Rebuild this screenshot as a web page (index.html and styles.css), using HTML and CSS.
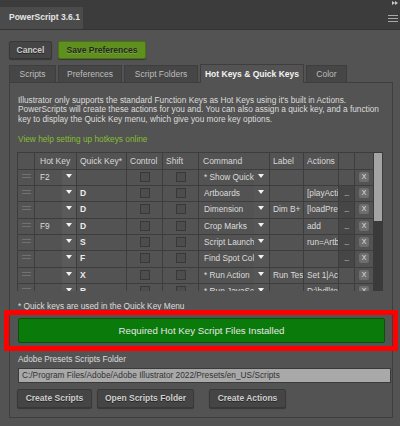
FILE: index.html
```html
<!DOCTYPE html>
<html lang="en">
<head>
    <meta charset="UTF-8">
    <title>PowerScript</title>
    <link rel="stylesheet" href="styles.css">
</head>
<body>
    <div class="topbar">
        <div class="title-tab">PowerScript 3.6.1</div>
        <div class="corner">
            <svg class="collapse" width="6" height="4" viewBox="0 0 6 4"><path d="M0 0L3 2L0 4ZM3 0L6 2L3 4Z" fill="#c8c8c8"/></svg>
            <svg class="menu" width="10" height="7" viewBox="0 0 10 7"><path d="M0 0.5H10M0 3.5H10M0 6.5H10" stroke="#a8a8a8" stroke-width="1"/></svg>
        </div>
    </div>

    <div class="toolbar">
        <div class="btn btn-cancel">Cancel</div>
        <div class="btn btn-save">Save Preferences</div>
    </div>

    <div class="tabs">
        <div class="tab tab-scripts">Scripts</div>
        <div class="tab tab-prefs">Preferences</div>
        <div class="tab tab-folders">Script Folders</div>
        <div class="tab tab-hotkeys active">Hot Keys &amp; Quick Keys</div>
        <div class="tab tab-color">Color</div>
    </div>

    <div class="content">
        <p class="intro">Illustrator only supports the standard Function Keys as Hot Keys using it's built in Actions.<br>
        PowerScripts will create these actions for you and. You can also assign a quick key, and a function<br>
        key to display the Quick Key menu, which give you more key options.</p>

        <div class="help">View help setting up hotkeys online</div>

        <div class="keys">
            <div class="grid">
                <!-- header -->
                <div class="c"></div>
                <div class="c h">Hot Key</div>
                <div class="c h">Quick Key*</div>
                <div class="c h">Control</div>
                <div class="c h">Shift</div>
                <div class="c h hcmd">Command</div>
                <div class="c h">Label</div>
                <div class="c h">Actions</div>
                <div class="c"></div>
                <div class="c"></div>

                <!-- row 1 -->
                <div class="c grip"><i></i></div>
                <div class="c hk"><span>F2</span><b class="dd"></b></div>
                <div class="c qk"></div>
                <div class="c chk"><span class="cb"></span></div>
                <div class="c chk"><span class="cb"></span></div>
                <div class="c cmd"><span>* Show Quick Key Menu</span><b class="dd"></b></div>
                <div class="c txt"></div>
                <div class="c txt"></div>
                <div class="c"></div>
                <div class="c del"><span class="x">X</span></div>

                <!-- row 2 -->
                <div class="c grip"><i></i></div>
                <div class="c hk"><span></span><b class="dd"></b></div>
                <div class="c qk">D</div>
                <div class="c chk"><span class="cb"></span></div>
                <div class="c chk"><span class="cb"></span></div>
                <div class="c cmd"><span>Artboards</span><b class="dd"></b></div>
                <div class="c txt"></div>
                <div class="c txt">[playAction]</div>
                <div class="c dots">...</div>
                <div class="c del"><span class="x">X</span></div>

                <!-- row 3 -->
                <div class="c grip"><i></i></div>
                <div class="c hk"><span></span><b class="dd"></b></div>
                <div class="c qk">D</div>
                <div class="c chk"><span class="cb"></span></div>
                <div class="c chk"><span class="cb"></span></div>
                <div class="c cmd"><span>Dimension</span><b class="dd"></b></div>
                <div class="c txt">Dim B+</div>
                <div class="c txt">[loadPreset]</div>
                <div class="c dots">...</div>
                <div class="c del"><span class="x">X</span></div>

                <!-- row 4 -->
                <div class="c grip"><i></i></div>
                <div class="c hk"><span>F9</span><b class="dd"></b></div>
                <div class="c qk">D</div>
                <div class="c chk"><span class="cb"></span></div>
                <div class="c chk"><span class="cb"></span></div>
                <div class="c cmd"><span>Crop Marks</span><b class="dd"></b></div>
                <div class="c txt"></div>
                <div class="c txt">add</div>
                <div class="c dots">...</div>
                <div class="c del"><span class="x">X</span></div>

                <!-- row 5 -->
                <div class="c grip"><i></i></div>
                <div class="c hk"><span></span><b class="dd"></b></div>
                <div class="c qk">S</div>
                <div class="c chk"><span class="cb"></span></div>
                <div class="c chk"><span class="cb"></span></div>
                <div class="c cmd"><span>Script Launcher</span><b class="dd"></b></div>
                <div class="c txt"></div>
                <div class="c txt">run=ArtboardsToFiles</div>
                <div class="c dots">...</div>
                <div class="c del"><span class="x">X</span></div>

                <!-- row 6 -->
                <div class="c grip"><i></i></div>
                <div class="c hk"><span></span><b class="dd"></b></div>
                <div class="c qk">F</div>
                <div class="c chk"><span class="cb"></span></div>
                <div class="c chk"><span class="cb"></span></div>
                <div class="c cmd"><span>Find Spot Color</span><b class="dd"></b></div>
                <div class="c txt"></div>
                <div class="c txt"></div>
                <div class="c dots">...</div>
                <div class="c del"><span class="x">X</span></div>

                <!-- row 7 -->
                <div class="c grip"><i></i></div>
                <div class="c hk"><span></span><b class="dd"></b></div>
                <div class="c qk">X</div>
                <div class="c chk"><span class="cb"></span></div>
                <div class="c chk"><span class="cb"></span></div>
                <div class="c cmd"><span>* Run Action</span><b class="dd"></b></div>
                <div class="c txt">Run Test</div>
                <div class="c txt">Set 1|Action 1</div>
                <div class="c"></div>
                <div class="c del"><span class="x">X</span></div>

                <!-- row 8 -->
                <div class="c grip"><i></i></div>
                <div class="c hk"><span></span><b class="dd"></b></div>
                <div class="c qk">R</div>
                <div class="c chk"><span class="cb"></span></div>
                <div class="c chk"><span class="cb"></span></div>
                <div class="c cmd"><span>* Run JavaScript</span><b class="dd"></b></div>
                <div class="c txt"></div>
                <div class="c txt">D:\bdl\test.jsx</div>
                <div class="c"></div>
                <div class="c del"><span class="x">X</span></div>
            </div>
            <div class="scrollbar"><div class="thumb"></div></div>
        </div>

        <p class="note">* Quick keys are used in the Quick Key Menu</p>

        <div class="installed">Required Hot Key Script Files Installed</div>

        <div class="folder-label">Adobe Presets Scripts Folder</div>
        <div class="folder-input">C:/Program Files/Adobe/Adobe Illustrator 2022/Presets/en_US/Scripts</div>

        <div class="actions">
            <div class="btn btn-create">Create Scripts</div>
            <div class="btn btn-open">Open Scripts Folder</div>
            <div class="btn btn-actions">Create Actions</div>
        </div>
    </div>

    <!-- red annotation frame -->
    <div class="highlight"></div>
</body>
</html>
```

FILE: styles.css
```css
body{margin: 0; width: 400px; height: 426px; overflow: hidden; position: relative; background: #535353; color: #dcdcdc; font-family: "Liberation Sans", Arial, sans-serif; font-size: 8.3px;}

/* panel header */
.topbar{height: 29px; display: flex; background: #3c3c3c; border-bottom: 1px solid #333;}
.title-tab{align-self: flex-end; width: 74px; height: 22px; padding-left: 9px; line-height: 21px; background: #4b4b4b; color: #e4e4e4; font-weight: bold; font-size: 8.5px;}
.corner{margin-left: auto; display: flex; flex-direction: column; align-items: flex-end; padding-right: 2px;}
.collapse{margin-top: 1px;}
.menu{margin-top: 10px;}

/* buttons */
.btn{height: 18px; box-sizing: border-box; line-height: 16px; text-align: center; border: 1px solid #383838; border-radius: 2px; background: #454545; color: #cfcfcf; font-weight: bold; font-size: 8.5px; text-shadow: 0 1px 0 #222; box-shadow: 0 1px 1px rgba(0,0,0,.35);}
.toolbar{display: flex; gap: 6px; padding: 11px 9px 0;}
.btn-cancel{width: 43px;}
.btn-save{width: 88px; background: #5e8f1f; border-color: #4a7414; color: #262626; text-shadow: 0 1px 0 #7aa83a;}

/* tabs */
.tabs{display: flex; gap: 2px; padding-left: 9px; margin-top: 6px; height: 17px; align-items: flex-end;}
.tab{height: 17px; box-sizing: border-box; line-height: 16px; text-align: center; background: #464646; color: #bdbdbd; font-size: 8.5px; border: 1px solid #3e3e3e; border-bottom: none;}
.tab-scripts{width: 47px;}
.tab-prefs{width: 64px;}
.tab-folders{width: 74px;}
.tab-hotkeys{width: 104px;}
.tab-color{width: 41px;}
.tab.active{height: 19px; margin-bottom: -1px; position: relative; background: #535353; color: #f2f2f2; font-weight: bold; line-height: 18px;}

/* tab page */
.content{margin-left: 9px; width: 384px; height: 336px; box-sizing: border-box; border: 1px solid #3e3e3e; padding: 13px 0 0 8px;}
.intro{margin: 0; line-height: 9.3px; white-space: nowrap;}
.help{margin-top: 10px; line-height: 10px; color: #86bd32;}

/* hot key table */
.keys{display: flex; margin: 8px 0 0 -1px; height: 139px; overflow: hidden;}
.grid{display: grid; grid-template-columns: 16px 41px 49px 35px 35px 70px 33px 34px 15px 18px; grid-template-rows: 16px; grid-auto-rows: 15.3px; gap: 1px; padding: 1px 0 0 1px; background: #3d3d3d; align-self: flex-start;}
.c{background: #535353; overflow: hidden; white-space: nowrap; line-height: 15px;}
.h{padding-left: 3px; line-height: 16px; font-size: 8.5px; color: #d8d8d8;}
.h:nth-child(2){padding-left: 5px;}
.hcmd{padding-left: 4px;}
.grip i{display: block; margin: 4px 0 0 4px; width: 9px; height: 4px; box-sizing: border-box; border-top: 1px solid #727272; border-bottom: 1px solid #727272;}
.hk, .cmd{display: flex;}
.hk span{flex: 1; padding-left: 5px;}
.cmd span{flex: 1; padding-left: 5px; overflow: hidden;}
.dd{width: 14px; flex: none; background: #5a5a5a; position: relative;}
.cmd .dd{width: 15px; background: #565656;}
.dd::after{content: ""; position: absolute; left: 4px; top: 4px; border-left: 3.5px solid transparent; border-right: 3.5px solid transparent; border-top: 4px solid #f2f2f2;}
.qk{padding-left: 3px; color: #ececec; font-weight: bold; font-size: 8.5px;}
.chk{display: flex; justify-content: center;}
.cb{margin-top: 2px; width: 10px; height: 10px; box-sizing: border-box; border: 1px solid #383838; background: #4d4d4d;}
.txt{padding-left: 3px;}
.dots{background: #464646; text-align: center; color: #e8e8e8; font-size: 7px; letter-spacing: -0.5px;}
.del{display: flex; justify-content: center;}
.x{margin-top: 2px; width: 10px; height: 10px; line-height: 10px; border-radius: 2px; background: #6e6e6e; color: #e2e2e2; text-align: center; font-size: 7px;}
.scrollbar{width: 10px; height: 139px; background: #3a3a3a;}
.thumb{margin: 1px 1px 0; height: 68px; background: #a4a4a4;}

/* below table */
.note{margin: 10px 0 0; line-height: 10px;}
.installed{margin-top: 7px; width: 367px; height: 25px; box-sizing: border-box; border: 1px solid #0a520a; border-radius: 2px; background: #0a7a0a; color: #e6e6e6; font-size: 9.7px; line-height: 23px; text-align: center;}
.folder-label{margin-top: 11px; line-height: 10px;}
.folder-input{margin-top: 4px; width: 373px; height: 15px; box-sizing: border-box; border: 1px solid #3a3a3a; background: #a9a9a9; color: #333; padding-left: 3px; line-height: 13px; white-space: nowrap; overflow: hidden;}
.actions{display: flex; margin: 6px 0 0 -1px;}
.actions .btn{height: 19px; line-height: 17px;}
.btn-create{width: 75px;}
.btn-open{width: 97px; margin-left: 5px;}
.btn-actions{width: 77px; margin-left: 15px;}

.highlight{position: absolute; left: 4px; top: 310px; width: 394px; height: 41px; box-sizing: border-box; border: 5px solid #ff0000;}
```
